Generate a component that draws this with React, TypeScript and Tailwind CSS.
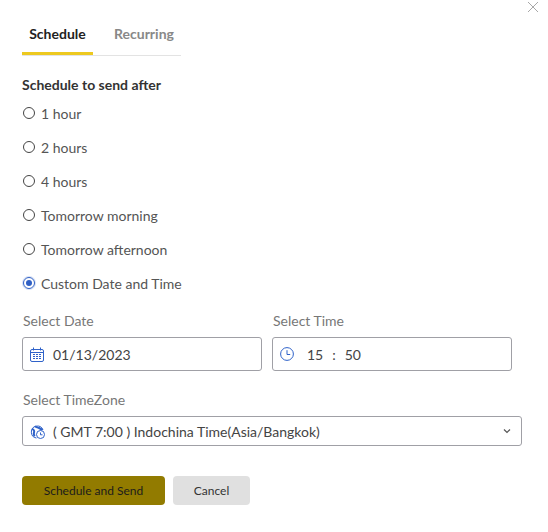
import { useState } from "react";

const OPTIONS = ["1 hour", "2 hours", "4 hours", "Tomorrow morning", "Tomorrow afternoon", "Custom Date and Time"];

function Radio({ label, checked }: { label: string; checked?: boolean }) {
  return (
    <div className="flex h-[34px] items-center text-[14px] text-[#555]">
      {checked ? (
        <span className="ml-[1px] flex h-[12px] w-[12px] items-center justify-center rounded-full border border-[#2f5fc4] shadow-[0_0_0_1px_#d5e0f5]">
          <span className="h-[6px] w-[6px] rounded-full bg-[#2f5fc4]" />
        </span>
      ) : (
        <span className="ml-[1px] h-[12px] w-[12px] rounded-full border border-[#444]" />
      )}
      <span className="ml-[6px]">{label}</span>
    </div>
  );
}

function CalendarIcon() {
  return (
    <svg width="14" height="15" viewBox="0 0 14 15" fill="none" stroke="#2f62c9" strokeWidth="1">
      <rect x="0.5" y="2.5" width="13" height="12" rx="1.5" />
      <path d="M3.5 0.5v3M10.5 0.5v3M0.5 5.5h13" />
      <path d="M3 7.500h2M6 7.500h2M9 7.500h2M3 9.500h2M6 9.500h2M9 9.500h2M3 11.500h2M6 11.500h2M9 11.500h2" strokeWidth="1.200" />
    </svg>
  );
}

function ClockIcon() {
  return (
    <svg width="14" height="14" viewBox="0 0 14 14" fill="none" stroke="#2f62c9" strokeWidth="1">
      <circle cx="7" cy="7" r="6.400" />
      <path d="M7 3.200v4.300h3.200" />
    </svg>
  );
}

function ZoneIcon() {
  return (
    <svg width="15" height="15" viewBox="0 0 15 15" fill="none" stroke="#2f62c9" strokeWidth="1">
      <path d="M6.500 14A6 6 0 1 1 13 6" />
      <path d="M2 5c2 .5 2.500 2 2 3.500S3.500 11 5 12M5 2c1 1.500 3 1.500 4 2s2 1 3.500 2" strokeWidth="2" />
      <circle cx="10.500" cy="10.500" r="4" fill="#fff" />
      <path d="M10.500 8.500v2.300h2" />
    </svg>
  );
}

export default function App() {
  const [tab] = useState("Schedule");

  return (
    <div className="relative h-[532px] w-[548px] bg-white pl-[22px] font-['Lato',sans-serif]">
      <button className="absolute right-[9px] top-[1px] text-[#a8a8a8]" aria-label="Close">
        <svg width="12" height="12" viewBox="0 0 12 12" stroke="currentColor" strokeWidth="1">
          <path d="M1 1l10 10M11 1L1 11" />
        </svg>
      </button>

      <div className="flex h-[56px] w-[159px] items-end border-b border-[#e3e3e3] pt-[20px]">
        <div
          className={`h-[35px] w-[71px] border-b-[3px] border-[#edc91f] pt-[3px] text-center text-[14px] font-bold ${
            tab === "Schedule" ? "text-[#222]" : "text-[#888]"
          }`}
        >
          Schedule
        </div>
        <div className="ml-[21px] h-[35px] pt-[3px] text-[14px] font-bold text-[#888]">Recurring</div>
      </div>

      <div className="mt-[19px] text-[14px] font-bold leading-[20px] text-[#333]">Schedule to send after</div>

      <div className="mt-[1px]">
        {OPTIONS.map((o) => (
          <Radio key={o} label={o} checked={o === "Custom Date and Time"} />
        ))}
      </div>

      <div className="mt-[11px] flex gap-[10px]">
        <div className="w-[240px]">
          <div className="pl-[1px] text-[14px] leading-[20px] text-[#777]">Select Date</div>
          <div className="mt-[6px] flex h-[34px] items-center rounded-[3px] border border-[#a0a0a6] pl-[7px] text-[14px] text-[#444]">
            <CalendarIcon />
            <span className="ml-[9px]">01/13/2023</span>
          </div>
        </div>
        <div className="w-[240px]">
          <div className="pl-[1px] text-[14px] leading-[20px] text-[#777]">Select Time</div>
          <div className="mt-[6px] flex h-[34px] items-center rounded-[3px] border border-[#a0a0a6] pl-[7px] text-[14px] text-[#444]">
            <ClockIcon />
            <span className="ml-[13px]">15</span>
            <span className="ml-[9px]">:</span>
            <span className="ml-[9px]">50</span>
          </div>
        </div>
      </div>

      <div className="mt-[19px] w-[500px]">
        <div className="pl-[1px] text-[14px] leading-[20px] text-[#777]">Select TimeZone</div>
        <div className="mt-[6px] flex h-[30px] items-center rounded-[3px] border border-[#a0a0a6] pl-[7px] pr-[10px] text-[14px] text-[#444]">
          <ZoneIcon />
          <span className="ml-[8px]">( GMT 7:00 ) Indochina Time(Asia/Bangkok)</span>
          <svg className="ml-auto" width="8" height="6" viewBox="0 0 8 6" fill="none" stroke="#555" strokeWidth="1.200">
            <path d="M1 1.500l3 3 3-3" />
          </svg>
        </div>
      </div>

      <div className="mt-[30px] flex gap-[8px] text-[12px]">
        <button className="h-[29px] w-[143px] rounded-[4px] bg-[#927b00] text-[#1c1c1c]">Schedule and Send</button>
        <button className="h-[29px] w-[77px] rounded-[4px] bg-[#e0e0e0] text-[#333]">Cancel</button>
      </div>
    </div>
  );
}
